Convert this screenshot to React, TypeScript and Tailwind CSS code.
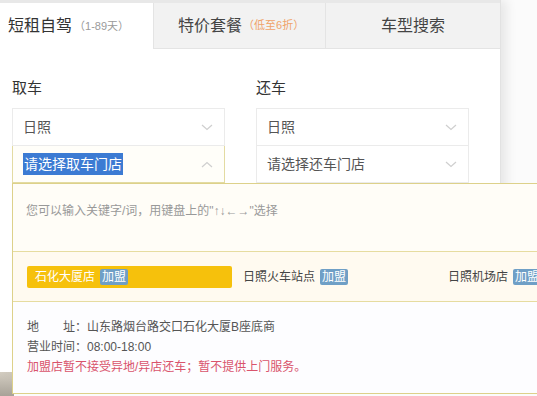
import React from "react";

const Chevron = ({ up = false }: { up?: boolean }) => (
  <svg width="12" height="7" viewBox="0 0 12 7" className="shrink-0">
    <path
      d={up ? "M1 6 L6 1.5 L11 6" : "M1 1 L6 5.5 L11 1"}
      fill="none"
      stroke="#cfcfcf"
      strokeWidth="1.2"
    />
  </svg>
);

const Badge = () => (
  <span className="ml-[5px] inline-flex h-[16px] items-center rounded-[2px] bg-[#6f9fc6] px-[2px] text-[12px] leading-none text-white">
    加盟
  </span>
);

export default function App() {
  return (
    <div
      className="relative h-[396px] w-[537px] overflow-hidden bg-[#fbfbfb]"
      style={{ fontFamily: '"Liberation Sans", "Noto Sans CJK SC", sans-serif' }}
    >
      {/* bottom-left background photo hint */}
      <div className="absolute bottom-0 left-0 h-[26px] w-[14px] bg-gradient-to-b from-[#d8d2c6] to-[#a8a298]" />

      {/* main panel */}
      <div className="relative flex h-[372px] w-[501px] flex-col border-r border-[#e2e2e2] bg-white shadow-[6px_0_10px_rgba(0,0,0,0.08)]">
        <div className="h-[3px] bg-[#e8e8e8]" />
        {/* tabs */}
        <div className="flex h-[46px]">
          <div className="flex w-[153px] items-center bg-white pl-[8px]">
            <span className="text-[16px] leading-none text-[#333]">短租自驾</span>
            <span className="ml-[2px] text-[11px] leading-none text-[#9a9a9a]">（1-89天）</span>
          </div>
          <div className="flex w-[172px] items-center border-b border-l border-[#e4e4e4] bg-[#f2f2f2] pl-[24px]">
            <span className="text-[16px] leading-none text-[#444]">特价套餐</span>
            <span className="ml-[1px] text-[11px] leading-none text-[#f0a36a]">（低至6折）</span>
          </div>
          <div className="flex flex-1 items-center justify-center border-b border-l border-[#e4e4e4] bg-[#f2f2f2]">
            <span className="text-[16px] leading-none text-[#444]">车型搜索</span>
          </div>
        </div>

        {/* body */}
        <div className="flex gap-[31px] px-[12px] pt-[29px]">
          <div className="flex w-[213px] flex-col">
            <div className="h-[20px] text-[15px] leading-[20px] text-[#333]">取车</div>
            <div className="mt-[10px] flex h-[38px] items-center justify-between border border-[#ebebeb] pl-[10px] pr-[11px]">
              <span className="text-[14px] leading-none text-[#555]">日照</span>
              <Chevron />
            </div>
            <div className="flex h-[37px] items-center justify-between border border-t-0 border-[#e3dba2] bg-[#fffef9] pl-[10px] pr-[11px]">
              <span className="bg-[#3c7bd3] px-[1px] text-[14px] leading-[22px] text-white">请选择取车门店</span>
              <Chevron up />
            </div>
          </div>
          <div className="flex w-[213px] flex-col">
            <div className="h-[20px] text-[15px] leading-[20px] text-[#333]">还车</div>
            <div className="mt-[10px] flex h-[38px] items-center justify-between border border-[#ebebeb] pl-[10px] pr-[11px]">
              <span className="text-[14px] leading-none text-[#555]">日照</span>
              <Chevron />
            </div>
            <div className="flex h-[37px] items-center justify-between border border-t-0 border-[#ebebeb] pl-[10px] pr-[11px]">
              <span className="text-[14px] leading-none text-[#555]">请选择还车门店</span>
              <Chevron />
            </div>
          </div>
        </div>
      </div>

      {/* dropdown overlay */}
      <div className="absolute left-[12px] top-[183px] flex h-[211px] w-[560px] flex-col border border-[#ddd18a] bg-[#fffdf7]">
        <div className="h-[67px] pl-[13px] pt-[18px] text-[12px] leading-[18px] text-[#999]">
          您可以输入关键字/词，用键盘上的"↑↓←→"选择
        </div>
        <div className="flex h-[51px] items-center border-y border-[#e6dca0] bg-[#fffaf0] pl-[14px]">
          <div className="flex h-[22px] w-[205px] items-center rounded-[2px] bg-[#f6c10c] pl-[8px]">
            <span className="text-[12px] leading-none text-white">石化大厦店</span>
            <Badge />
          </div>
          <div className="ml-[11px] flex w-[205px] items-center">
            <span className="text-[12px] leading-none text-[#444]">日照火车站点</span>
            <Badge />
          </div>
          <div className="flex items-center">
            <span className="text-[12px] leading-none text-[#444]">日照机场店</span>
            <Badge />
          </div>
        </div>
        <div className="flex-1 bg-[#fdfdff] pl-[14px] pt-[15px] text-[12px] leading-[20px] text-[#555]">
          <div>地　　址：山东路烟台路交口石化大厦B座底商</div>
          <div>营业时间：08:00-18:00</div>
          <div className="text-[#d9546c]">加盟店暂不接受异地/异店还车；暂不提供上门服务。</div>
        </div>
      </div>
    </div>
  );
}
